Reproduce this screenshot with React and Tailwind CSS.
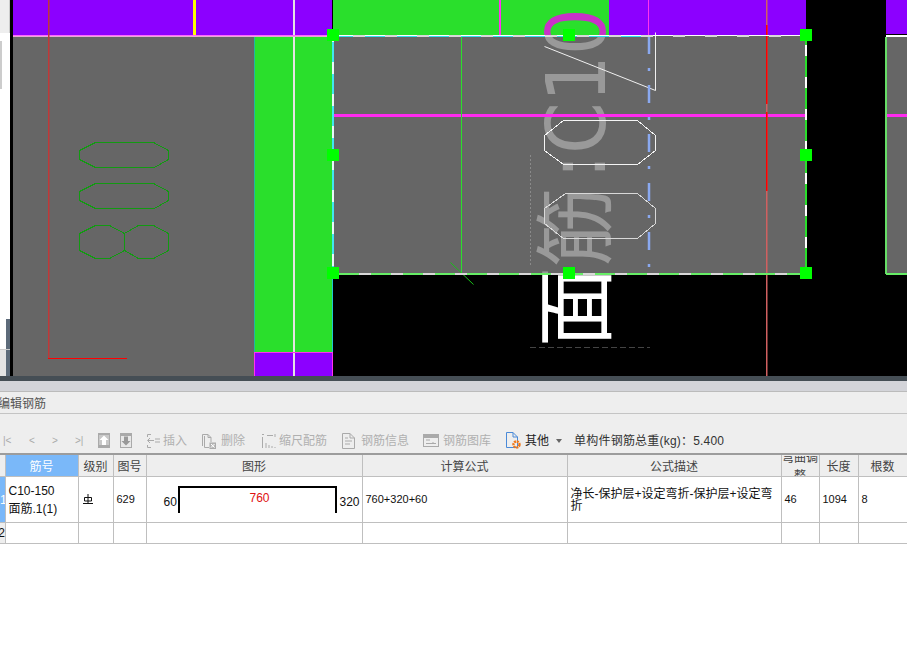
import React from "react";

const font = { fontFamily: '"Liberation Sans", "Noto Sans CJK SC", sans-serif' };

const handles = [
  [333, 35], [569, 35], [806, 35],
  [333, 155], [806, 155],
  [333, 273], [569, 273], [806, 273],
];

const Poly = ({ points, stroke }) => (
  <polygon points={points} fill="none" stroke={stroke} strokeWidth="1" shapeRendering="crispEdges" transform="translate(0.5 0.5)" />
);

const LatinLabel = () => (
  <g transform="translate(605 347) rotate(-90)">
    <text x="168" fontSize="82" textLength="171" lengthAdjust="spacingAndGlyphs" fontFamily='"DejaVu Sans", sans-serif'>:C10</text>
  </g>
);

// CAD view, drawn back to front
const CadCanvas = () => (
  <svg width="897" height="376" viewBox="10 0 897 376" className="block shrink-0">
    <defs>
      <clipPath id="topBand">
        <rect x="530" y="0" width="90" height="36" />
      </clipPath>
    </defs>
    <rect x="10" y="0" width="897" height="376" fill="#000" />

    {/* label sits under the see-through panel */}
    <g fill="#fff">
      <g transform="translate(604 347) rotate(-90)">
        <text fontSize="80" fontFamily='"Noto Sans CJK SC", sans-serif'>面筋</text>
      </g>
      <LatinLabel />
    </g>

    <rect x="13" y="37" width="241" height="339" fill="#666" />
    <rect x="333" y="36" width="473" height="238" fill="#808080" fillOpacity="0.8" />
    <rect x="886" y="36" width="21" height="238" fill="#666" />

    <rect x="13" y="0" width="319" height="35" fill="#8c00ff" />
    <rect x="333" y="0" width="276" height="35" fill="#2adf2c" />
    <rect x="609" y="0" width="197" height="35" fill="#8c00ff" />
    <rect x="886" y="0" width="21" height="34" fill="#8c00ff" />
    <rect x="254" y="37" width="78" height="315" fill="#2adf2c" />
    <rect x="254" y="352" width="79" height="24" fill="#8c00ff" />

    <g clipPath="url(#topBand)" fill="#c832c8">
      <LatinLabel />
    </g>

    <rect x="193" y="0" width="3" height="35" fill="#ffff00" />
    <rect x="293" y="0" width="2" height="376" fill="#e4e4e4" />
    <rect x="499" y="0" width="2" height="35" fill="#ff33ee" />
    <rect x="648" y="0" width="1" height="36" fill="#ff33ee" />

    <rect x="13" y="35" width="319" height="1" fill="#ff66ff" />
    <rect x="13" y="36" width="320" height="1" fill="#e8a8d8" />
    <rect x="254" y="352" width="79" height="1" fill="#ff33ee" />
    <rect x="254" y="352" width="1" height="24" fill="#ff33ee" />
    <rect x="332" y="352" width="1" height="24" fill="#ff33ee" />
    <rect x="254" y="37" width="1" height="315" fill="#20b8a0" />
    <rect x="332" y="37" width="1" height="315" fill="#20c8d0" />

    {/* rebar lines */}
    <rect x="48" y="0" width="1.5" height="358" fill="#c03838" />
    <rect x="48" y="358" width="79" height="1" fill="#ff0000" />
    <rect x="333" y="114" width="473" height="3" fill="#ff2af0" />
    <rect x="886" y="114" width="21" height="3" fill="#ff2af0" />
    <rect x="885" y="116" width="2" height="39" fill="#d040d0" />
    <rect x="766" y="0" width="1.5" height="376" fill="#d06060" />
    <rect x="766" y="25" width="1.5" height="79" fill="#ff0000" />
    <rect x="766" y="112" width="1.5" height="79" fill="#ff0000" />
    <rect x="461" y="0" width="1" height="274" fill="#2adf2c" />
    <line x1="450.5" y1="262.5" x2="473.5" y2="284.5" stroke="#18c018" />
    <line x1="530.5" y1="155" x2="530.5" y2="265" stroke="#8a8a8a" strokeDasharray="2 2" />
    <line x1="530" y1="347.5" x2="650" y2="347.5" stroke="#444" strokeDasharray="6 3" />

    <Poly stroke="#129a12" points="95,142 153,142 168,150 168,159 154,167 95,167 79,159 79,150" />
    <Poly stroke="#129a12" points="95,183 153,183 168,191 168,200 154,208 95,208 79,200 79,191" />
    <Poly stroke="#129a12" points="95,225 109,225 124,233 124,250 109,258 95,258 79,250 79,233" />
    <Poly stroke="#129a12" points="124,233 138,225 153,225 168,233 168,250 153,258 138,258 124,250" />

    <Poly stroke="#f4f4f4" points="563,120 637,120 655,135 655,150 637,164 563,164 544,150 544,135" />
    <Poly stroke="#d8d8d8" points="565,193 637,193 655,208 655,223 637,238 563,238 544,223 544,208" />
    <polyline points="544,46 655,90 655,32" fill="none" stroke="#f0f0f0" transform="translate(0.5 0.5)" />

    <line x1="649" y1="36" x2="649" y2="274" stroke="#8aa9f0" strokeWidth="2.5" strokeDasharray="18 14 3 14" />

    {/* selection outline */}
    <rect x="333" y="35" width="473" height="1" fill="#fff" />
    <rect x="333" y="36" width="315" height="1" fill="#30e0f0" />
    <rect x="333" y="273" width="473" height="2" fill="#66ee66" />
    <rect x="332" y="36" width="2" height="238" fill="#40e8f0" />
    <rect x="805" y="36" width="2" height="238" fill="#2adf2c" />
    <rect x="885" y="37" width="2" height="237" fill="#66dd66" />
    <rect x="886" y="273" width="21" height="2" fill="#66ee66" />
    <rect x="886" y="35" width="21" height="2" fill="#fff" />
    <line x1="333" y1="36" x2="806" y2="36" stroke="#d8d8d8" strokeWidth="2" strokeDasharray="12 20" strokeDashoffset="12" />
    <line x1="333" y1="274" x2="806" y2="274" stroke="#d8d8d8" strokeWidth="2" strokeDasharray="12 20" strokeDashoffset="6" />
    <line x1="333" y1="36" x2="333" y2="274" stroke="#e8f8f8" strokeWidth="2" strokeDasharray="12 20" strokeDashoffset="6" />
    <line x1="806" y1="36" x2="806" y2="274" stroke="#fff" strokeWidth="2" strokeDasharray="11 21" strokeDashoffset="23" />

    {handles.map(([x, y]) => (
      <rect key={`${x}-${y}`} x={x - 6} y={y - 6} width="12" height="12" fill="#00ff00" />
    ))}
  </svg>
);

const ArrowBox = ({ up }) => (
  <svg width="12" height="15" viewBox="0 0 12 15" className="block">
    <rect x="0" y="0" width="12" height="15" fill="#aaa" />
    {up ? (
      <>
        <rect x="1" y="2" width="10" height="10" fill="#c8c8c8" />
        <path d="M6 2.5 L10.5 7 H8 V12 H4 V7 H1.5 Z" fill="#fff" />
      </>
    ) : (
      <>
        <rect x="1" y="3" width="10" height="11" fill="#e8e8e8" />
        <path d="M6 12.5 L10.5 8 H8 V3.5 H4 V8 H1.5 Z" fill="#999" />
      </>
    )}
  </svg>
);

const InsertIcon = () => (
  <svg width="14" height="16" viewBox="0 0 14 16" fill="none" stroke="#aaa" className="block">
    <path d="M5 1.5 H1.5 V4 M5 14.5 H1.5 V12 M8 7.5 H2 M4 5 L1.5 7.5 L4 10 M9 6 H14 M9 9 H14" />
  </svg>
);

const DeleteIcon = () => (
  <svg width="16" height="16" viewBox="0 0 16 16" fill="none" stroke="#aaa" className="block">
    <path d="M2.5 13 V1.5 H8 L11 4.5 V9 M8 1.5 V4.5 H11 M4.5 3 V14.5 H9" />
    <rect x="10" y="10" width="5.5" height="5.5" fill="#bbb" />
    <path d="M11 11 L14.5 14.5 M14.5 11 L11 14.5" stroke="#fff" />
  </svg>
);

const ScaleIcon = () => (
  <svg width="16" height="16" viewBox="0 0 16 16" fill="none" stroke="#aaa" className="block">
    <path d="M1.5 4 V15 M1 1.5 H3 M6 2.5 H12 M14 1 V4 M5 15 V10 M8 15 V12 M11 15 V13 M14 15 V14" />
  </svg>
);

const DocIcon = () => (
  <svg width="13" height="16" viewBox="0 0 13 16" fill="none" stroke="#aaa" className="block">
    <path d="M0.5 0.5 H8 L12.5 5 V15.5 H0.5 Z M8 0.5 V5 H12.5 M3 5 H6 M3 8 H10 M3 11 H8" />
  </svg>
);

const LibraryIcon = () => (
  <svg width="16" height="13" viewBox="0 0 16 13" fill="none" stroke="#aaa" className="block">
    <rect x="0.5" y="0.5" width="15" height="12" />
    <rect x="1" y="1" width="14" height="2.5" fill="#aaa" />
    <path d="M3 6 H7 M3 9.5 H13 M10 9 V8" />
  </svg>
);

const OtherIcon = () => (
  <svg width="15" height="17" viewBox="0 0 15 17" fill="none" className="block">
    <path d="M0.5 0.5 H7 L11.5 5 V15.5 H0.5 Z M7 0.5 V5 H11.5" stroke="#4a8ad8" />
    <circle cx="10.5" cy="12.5" r="3" stroke="#f07818" strokeWidth="2.4" strokeDasharray="2 0.8" />
  </svg>
);

const GradeMark = () => (
  <svg width="10" height="11" viewBox="0 0 10 11" fill="none" stroke="#111" className="block">
    <path d="M5 0 V10 M0 9.5 H10 M1.5 3.5 H8.5 V7 H1.5 Z" />
  </svg>
);

const ToolItem = ({ icon, label, className }) => (
  <div className={`flex items-center ${className}`}>
    {icon}
    <span className="text-[12px] text-[#b0b0b0]">{label}</span>
  </div>
);

const Toolbar = () => (
  <div className="flex h-[39px] items-center bg-[#eeeeee] pl-[3px] pt-[14px] text-[#aaa]">
    <span className="w-[26px] text-[10px]">|&lt;</span>
    <span className="w-[23px] text-[10px]">&lt;</span>
    <span className="w-[23px] text-[10px]">&gt;</span>
    <span className="w-[23px] text-[10px]">&gt;|</span>
    <ArrowBox up />
    <div className="ml-[10px]">
      <ArrowBox />
    </div>
    <ToolItem className="ml-[14px] gap-[3px]" icon={<InsertIcon />} label="插入" />
    <ToolItem className="ml-[13px] gap-[5px]" icon={<DeleteIcon />} label="删除" />
    <ToolItem className="ml-[16px] gap-[2px]" icon={<ScaleIcon />} label="缩尺配筋" />
    <ToolItem className="ml-[15px] gap-[6px]" icon={<DocIcon />} label="钢筋信息" />
    <ToolItem className="ml-[14px] gap-[4px]" icon={<LibraryIcon />} label="钢筋图库" />
    <div className="ml-[15px] flex items-center gap-[4px]">
      <OtherIcon />
      <span className="text-[12px] text-[#222]">其他</span>
    </div>
    <svg width="6" height="4" viewBox="0 0 6 4" className="ml-[7px] block">
      <path d="M0 0 H6 L3 4 Z" fill="#666" />
    </svg>
    <span className="ml-[12px] text-[12px] tracking-[0.2px] text-[#333]">单构件钢筋总重(kg)：5.400</span>
  </div>
);

const headers = [
  { label: "级别", width: "w-[35px]" },
  { label: "图号", width: "w-[33px]" },
  { label: "图形", width: "w-[216px]" },
  { label: "计算公式", width: "w-[205px]" },
  { label: "公式描述", width: "w-[214px]" },
  { label: "弯曲调整", width: "w-[38px]" },
  { label: "长度", width: "w-[39px]" },
  { label: "根数", width: "w-[49px]" },
];

const cell = "border-r border-b border-[#bfbfbf] p-0 align-middle overflow-hidden";

const BarShape = () => (
  <div className="relative h-[45px]">
    <span className="absolute left-[17px] top-[16px] text-[12px] text-[#111]">60</span>
    <div className="absolute left-[31px] top-[9px] h-[27px] w-[159px] border-x-2 border-t-2 border-black" />
    <span className="absolute left-[103px] top-[12px] text-[12px] text-[#e01010]">760</span>
    <span className="absolute left-[193px] top-[16px] text-[12px] text-[#111]">320</span>
  </div>
);

const SteelTable = () => (
  <table className="w-[907px] table-fixed border-collapse text-[11px] text-[#111]">
    <colgroup>
      <col className="w-[5px]" />
      <col className="w-[73px]" />
      {headers.map((h) => (
        <col key={h.label} className={h.width} />
      ))}
    </colgroup>
    <tbody>
      <tr className="h-[21px] bg-[#eeeeee] text-[12px] text-[#444]">
        <td className={cell} />
        <td className={`${cell} bg-[#7ab8f9] pt-[3px] text-center text-white`}>筋号</td>
        {headers.map((h) => (
          <td key={h.label} className={`${cell} text-center`}>
            <div className="flex h-[20px] items-center justify-center overflow-hidden pt-[3px] leading-[18px]">
              {h.label}
            </div>
          </td>
        ))}
      </tr>
      <tr className="h-[46px] bg-white">
        <td className={`${cell} bg-[#7ab8f9] text-right text-[12px] text-white`}>
          <div className="w-[5px] overflow-hidden">1</div>
        </td>
        <td className={`${cell} pl-[3px] text-[12px] leading-[18px]`}>
          C10-150
          <br />
          面筋.1(1)
        </td>
        <td className={`${cell} pl-[4px]`}>
          <GradeMark />
        </td>
        <td className={`${cell} pl-[3px]`}>629</td>
        <td className={cell}>
          <BarShape />
        </td>
        <td className={`${cell} pl-[3px]`}>760+320+60</td>
        <td className={`${cell} pl-[3px] text-[12px] leading-[12px]`}>
          净长-保护层+设定弯折-保护层+设定弯折
        </td>
        <td className={`${cell} pl-[3px]`}>46</td>
        <td className={`${cell} pl-[3px]`}>1094</td>
        <td className={`${cell} pl-[3px]`}>8</td>
      </tr>
      <tr className="h-[21px] bg-white">
        <td className={`${cell} bg-[#eeeeee] text-[12px]`}>
          <div className="w-[5px] overflow-hidden [direction:rtl]">2</div>
        </td>
        <td className={cell} />
        {headers.map((h) => (
          <td key={h.label} className={cell} />
        ))}
      </tr>
    </tbody>
  </table>
);

const App = () => (
  <div className="flex h-[666px] w-[907px] flex-col overflow-hidden bg-white" style={font}>
    <div className="flex h-[376px] shrink-0">
      <div className="flex w-[10px] shrink-0 flex-col bg-white">
        <div className="h-[33px] border-r border-[#ccc] bg-[#eeeeee]" />
        <div className="mt-[8px] h-[48px] w-[2px] bg-[#cccccc]" />
        <div className="flex-1" />
        <div className="ml-[6px] h-[30px] w-[4px] bg-[#5d6b7a]" />
        <div className="flex h-[27px] border-t border-[#ccc] bg-[#e4e4e4]">
          <div className="w-[6px]" />
          <div className="w-[4px] bg-[#5d6b7a]" />
        </div>
      </div>
      <CadCanvas />
    </div>

    <div className="h-[5px] shrink-0 bg-[#454e55]" />
    <div className="h-[11px] shrink-0 border-b border-[#bbb] bg-[#d3d4d9]" />
    <div className="flex h-[22px] shrink-0 items-center overflow-hidden border-b border-[#c4c4c4] bg-[#eeeeee] pt-[2px] text-[12px] text-[#555]">
      <span className="ml-[-2px]">编辑钢筋</span>
    </div>
    <div className="shrink-0 border-b-2 border-[#9c9c9c]">
      <Toolbar />
    </div>
    <SteelTable />
  </div>
);

export default App;
